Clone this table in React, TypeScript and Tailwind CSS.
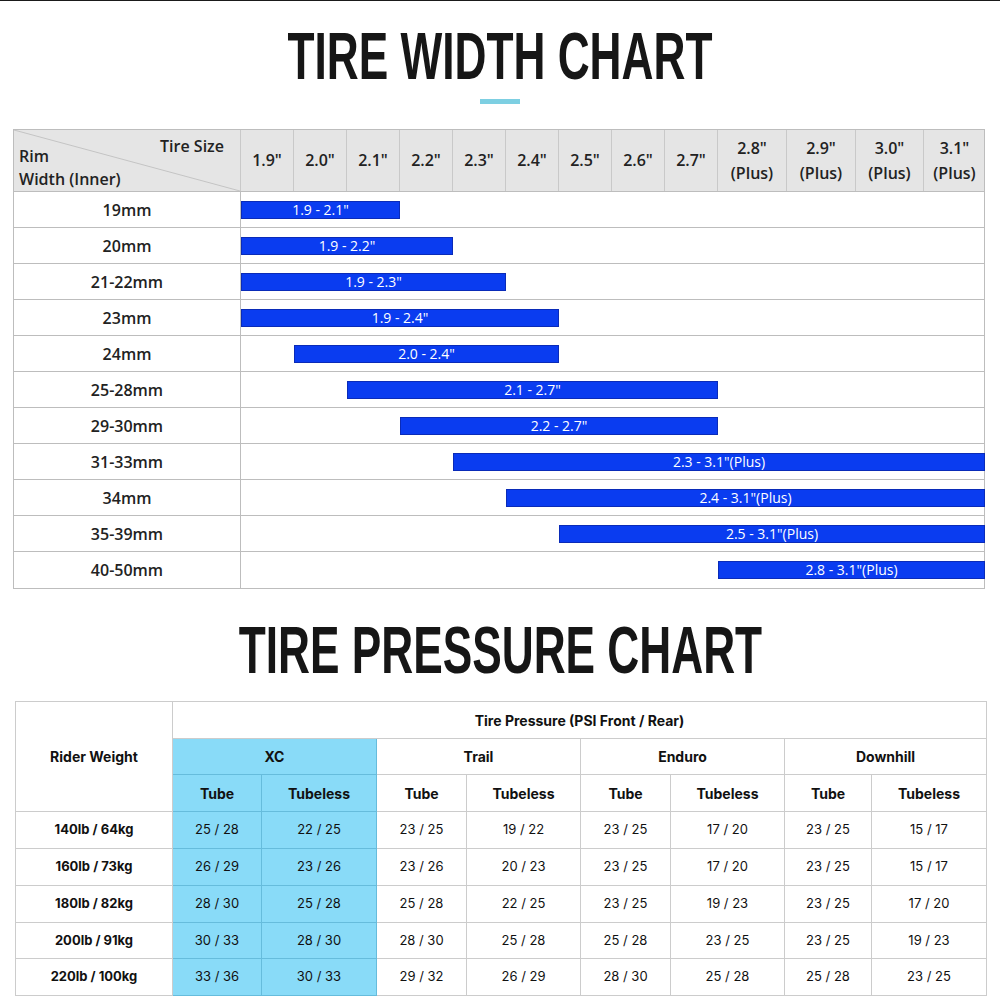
import React from "react";

const sizeCols = [
  { a: '1.9"' },
  { a: '2.0"' },
  { a: '2.1"' },
  { a: '2.2"' },
  { a: '2.3"' },
  { a: '2.4"' },
  { a: '2.5"' },
  { a: '2.6"' },
  { a: '2.7"' },
  { a: '2.8"', b: "(Plus)" },
  { a: '2.9"', b: "(Plus)" },
  { a: '3.0"', b: "(Plus)" },
  { a: '3.1"', b: "(Plus)", last: true },
];

const widthRows = [
  { rim: "19mm", label: '1.9 - 2.1"', cls: "col-start-1 col-end-4" },
  { rim: "20mm", label: '1.9 - 2.2"', cls: "col-start-1 col-end-5" },
  { rim: "21-22mm", label: '1.9 - 2.3"', cls: "col-start-1 col-end-6" },
  { rim: "23mm", label: '1.9 - 2.4"', cls: "col-start-1 col-end-7" },
  { rim: "24mm", label: '2.0 - 2.4"', cls: "col-start-2 col-end-7" },
  { rim: "25-28mm", label: '2.1 - 2.7"', cls: "col-start-3 col-end-10" },
  { rim: "29-30mm", label: '2.2 - 2.7"', cls: "col-start-4 col-end-10" },
  { rim: "31-33mm", label: '2.3 - 3.1"(Plus)', cls: "col-start-5 col-end-14" },
  { rim: "34mm", label: '2.4 - 3.1"(Plus)', cls: "col-start-6 col-end-14" },
  { rim: "35-39mm", label: '2.5 - 3.1"(Plus)', cls: "col-start-7 col-end-14" },
  { rim: "40-50mm", label: '2.8 - 3.1"(Plus)', cls: "col-start-10 col-end-14" },
];

const pressureRows = [
  ["140lb / 64kg", "25 / 28", "22 / 25", "23 / 25", "19 / 22", "23 / 25", "17 / 20", "23 / 25", "15 / 17"],
  ["160lb / 73kg", "26 / 29", "23 / 26", "23 / 26", "20 / 23", "23 / 25", "17 / 20", "23 / 25", "15 / 17"],
  ["180lb / 82kg", "28 / 30", "25 / 28", "25 / 28", "22 / 25", "23 / 25", "19 / 23", "23 / 25", "17 / 20"],
  ["200lb / 91kg", "30 / 33", "28 / 30", "28 / 30", "25 / 28", "25 / 28", "23 / 25", "23 / 25", "19 / 23"],
  ["220lb / 100kg", "33 / 36", "30 / 33", "29 / 32", "26 / 29", "28 / 30", "25 / 28", "25 / 28", "23 / 25"],
];

const sizeTemplate = "grid-cols-[53px_53px_53px_53px_53px_53px_53px_53px_53px_69px_69px_68px_61px]";

function Title({ text }: { text: string }) {
  return (
    <div className="flex justify-center">
      <div
        className="scale-x-[0.66] whitespace-nowrap text-[67px] leading-[67px] font-bold text-[#161616]"
        style={{ fontFamily: '"Liberation Sans", Arial, sans-serif' }}
      >
        {text}
      </div>
    </div>
  );
}

function WidthChart() {
  return (
    <div
      className="ml-[13px] w-[972px] border border-[#bdbdbd] text-[#222]"
      style={{ fontFamily: '"Open Sans", sans-serif' }}
    >
      <div className="flex h-[62px] border-b border-[#bdbdbd] bg-[#e5e5e5]">
        <div className="relative w-[227px] shrink-0 border-r border-[#c9c9c9]">
          <svg className="absolute inset-0 h-full w-full" preserveAspectRatio="none" viewBox="0 0 100 100">
            <line x1="0" y1="0" x2="100" y2="100" stroke="#c4c4c4" strokeWidth="1" vectorEffect="non-scaling-stroke" />
          </svg>
          <span className="absolute right-[16px] top-[6px] text-[16px] font-semibold leading-[20px]">Tire Size</span>
          <span className="absolute left-[5px] top-[16px] text-[16px] font-semibold leading-[20px]">Rim</span>
          <span className="absolute left-[5px] top-[39px] text-[16px] font-semibold leading-[20px]">Width (Inner)</span>
        </div>
        <div className={`grid flex-1 ${sizeTemplate}`}>
          {sizeCols.map((c) => (
            <div
              key={c.a}
              className={`flex flex-col items-center justify-center text-[16px] font-semibold leading-[25px] ${c.last ? "" : "border-r border-[#c9c9c9]"}`}
            >
              <span>{c.a}</span>
              {c.b && <span>{c.b}</span>}
            </div>
          ))}
        </div>
      </div>
      {widthRows.map((r, i) => (
        <div
          key={r.rim}
          className={`flex h-[36px] ${i < widthRows.length - 1 ? "border-b border-[#bdbdbd]" : "h-[35px]"}`}
        >
          <div className="flex w-[227px] shrink-0 items-center justify-center border-r border-[#bdbdbd] text-[16px] font-semibold">
            {r.rim}
          </div>
          <div className={`grid flex-1 items-center ${sizeTemplate}`}>
            <div
              className={`${r.cls} flex h-[18px] items-center justify-center border border-[#0a2bb8] bg-[#0a3cf0] text-[14px] leading-none text-white`}
            >
              {r.label}
            </div>
          </div>
        </div>
      ))}
    </div>
  );
}

const pTemplate = "grid-cols-[157px_89px_115px_90px_114px_90px_114px_87px_115px]";

function PressureChart() {
  const cell = "flex items-center justify-center border-r border-b border-[#cccccc]";
  const xc = "flex items-center justify-center border-r border-b border-[#66bcdc] bg-[#89dbf8]";
  return (
    <div
      className={`ml-[15px] grid w-[972px] ${pTemplate} grid-rows-[37px_36px_37px_37px_37px_37px_36px_37px] border-l border-t border-[#cccccc] text-[#111]`}
      style={{ fontFamily: 'Inter, "Noto Sans", sans-serif' }}
    >
      <div className={`${cell} row-span-3 text-[14px] font-bold`}>Rider Weight</div>
      <div className={`${cell} col-span-8 text-[14px] font-bold`}>Tire Pressure (PSI Front / Rear)</div>
      <div className={`${xc} col-span-2 text-[14px] font-bold`}>XC</div>
      <div className={`${cell} col-span-2 text-[14px] font-bold`}>Trail</div>
      <div className={`${cell} col-span-2 text-[14px] font-bold`}>Enduro</div>
      <div className={`${cell} col-span-2 text-[14px] font-bold`}>Downhill</div>
      {[0, 1, 2, 3].map((g) =>
        ["Tube", "Tubeless"].map((t) => (
          <div key={`${g}-${t}`} className={`${g === 0 ? xc : cell} text-[14px] font-bold`}>
            {t}
          </div>
        ))
      )}
      {pressureRows.map((row) =>
        row.map((v, j) => (
          <div
            key={`${row[0]}-${j}`}
            className={`${j === 1 || j === 2 ? xc : cell} ${j === 0 ? "text-[13px] font-bold" : "text-[13px]"}`}
          >
            {v}
          </div>
        ))
      )}
    </div>
  );
}

export default function App() {
  return (
    <div className="relative h-[1006px] w-[1000px] overflow-hidden bg-white">
      <div className="h-px w-full bg-[#1a1a1a]" />
      <div className="pt-[21px]">
        <Title text="TIRE WIDTH CHART" />
      </div>
      <div className="mt-[10px] flex justify-center">
        <div className="h-[5px] w-[40px] bg-[#7dcfe2]" />
      </div>
      <div className="mt-[25px]">
        <WidthChart />
      </div>
      <div className="mt-[27px]">
        <Title text="TIRE PRESSURE CHART" />
      </div>
      <div className="mt-[18px]">
        <PressureChart />
      </div>
    </div>
  );
}
